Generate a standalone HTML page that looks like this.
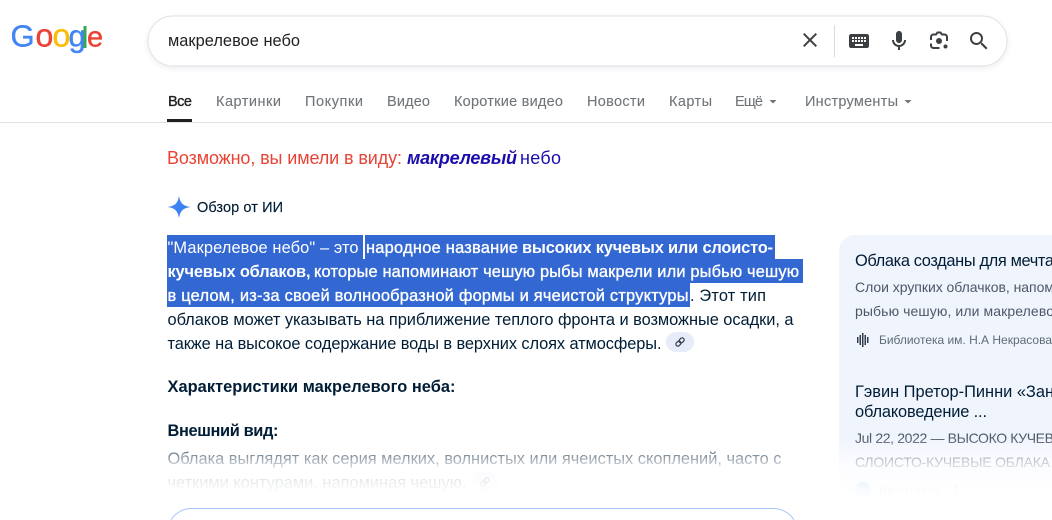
<!DOCTYPE html>
<html lang="ru">
<head>
<meta charset="utf-8">
<title>макрелевое небо</title>
<style>
html,body{margin:0;padding:0;width:1052px;height:520px;overflow:hidden;background:#fff}
svg{display:block;position:absolute;left:0;top:0}
text{font-family:"Liberation Sans",sans-serif;white-space:pre}
.nav{font-size:14.5px;fill:#70757a;stroke:#70757a;stroke-width:.1}
.b{font-size:16.4px;fill:#001d35}
.w{font-size:16.4px;fill:#fff}
.wm{font-size:16.4px;fill:#fff;stroke:#fff;stroke-width:.35}
.wb{font-size:16.4px;fill:#fff;font-weight:bold}
.h{font-size:16.4px;fill:#001d35;font-weight:bold}
.ct{font-size:16.4px;fill:#001d35}
.cs{font-size:14px;fill:#4d5866}
.cm{font-size:12px;fill:#5f6b78}
.logo{font-size:31px;stroke-width:.4}
</style>
</head>
<body>
<svg width="1052" height="520" viewBox="0 0 1052 520" xmlns="http://www.w3.org/2000/svg">
<defs>
<linearGradient id="fade" gradientUnits="userSpaceOnUse" x1="0" y1="437" x2="0" y2="502">
<stop offset="0" stop-color="#fff" stop-opacity="0"/>
<stop offset=".42" stop-color="#fff" stop-opacity=".76"/>
<stop offset=".78" stop-color="#fff" stop-opacity=".96"/>
<stop offset="1" stop-color="#fff" stop-opacity="1"/>
</linearGradient>
<linearGradient id="star" x1="0" y1="0" x2="1" y2="1">
<stop offset="0" stop-color="#4c8df6"/>
<stop offset="1" stop-color="#2f78ee"/>
</linearGradient>
<filter id="sh" x="-5%" y="-30%" width="110%" height="170%">
<feDropShadow dx="0" dy="2" stdDeviation="3" flood-color="#202124" flood-opacity=".07"/>
</filter>
</defs>

<!-- logo -->
<g class="logo">
<text class="logo" x="10.500" y="46.500" fill="#4285f4" stroke="#4285f4">G</text>
<text class="logo" x="35.500" y="46.500" fill="#ea4335" stroke="#ea4335" style="font-size:32px">o</text>
<text class="logo" x="52.500" y="46.500" fill="#fbbc05" stroke="#fbbc05" style="font-size:32px">o</text>
<text class="logo" x="68.500" y="46.500" fill="#4285f4" stroke="#4285f4" style="font-size:31px">g</text>
<rect x="83.500" y="26" width="3" height="22" fill="#34a853"/>
<text class="logo" x="87" y="46.500" fill="#ea4335" stroke="#ea4335" style="font-size:29px">e</text>
</g>

<!-- search box -->
<rect x="148" y="16" width="859" height="50" rx="25" fill="#fff" stroke="#dfe0ea" stroke-width="1" filter="url(#sh)"/>
<text x="168" y="46" font-size="16.4" fill="#202124" textLength="132">макрелевое небо</text>
<g fill="#3c4043">
<path transform="translate(798,28)" d="M19 6.41L17.59 5 12 10.59 6.41 5 5 6.41 10.59 12 5 17.59 6.41 19 12 13.41 17.59 19 19 17.59 13.41 12z"/>
<rect x="834" y="25" width="1" height="32" fill="#dadce0"/>
<path transform="translate(847,29)" d="M20 5H4c-1.1 0-1.99.9-1.99 2L2 17c0 1.1.9 2 2 2h16c1.1 0 2-.9 2-2V7c0-1.1-.9-2-2-2zm-9 3h2v2h-2V8zm0 3h2v2h-2v-2zM8 8h2v2H8V8zm0 3h2v2H8v-2zm-1 2H5v-2h2v2zm0-3H5V8h2v2zm9 7H8v-2h8v2zm0-4h-2v-2h2v2zm0-3h-2V8h2v2zm3 3h-2v-2h2v2zm0-3h-2V8h2v2z"/>
<path transform="translate(887,29)" d="M12 14c1.66 0 3-1.34 3-3V5c0-1.66-1.34-3-3-3S9 3.34 9 5v6c0 1.66 1.34 3 3 3zM17 11c0 2.76-2.24 5-5 5s-5-2.24-5-5H5c0 3.53 2.61 6.43 6 6.92V21h2v-3.08c3.39-.49 6-3.39 6-6.92h-2z"/>
<path d="M931 40v-3a2.500 2.500 0 0 1 2.500-2.500h2.500l1.500-2h3l1.500 2h2.500a2.500 2.500 0 0 1 2.500 2.500v4" fill="none" stroke="#3c4043" stroke-width="2"/>
<path d="M931 43.500v2a2.500 2.500 0 0 0 2.500 2.500h6" fill="none" stroke="#3c4043" stroke-width="2"/>
<circle cx="939" cy="41" r="3"/>
<circle cx="945.500" cy="46.500" r="2"/>
<path transform="translate(967,29)" d="M15.500 14h-.79l-.28-.27A6.471 6.471 0 0 0 16 9.500 6.500 6.500 0 1 0 9.500 16c1.610 0 3.090-.59 4.230-1.570l.27.28v.79l5 4.990L20.490 19l-4.990-5zm-6 0C7.010 14 5 11.990 5 9.500S7.010 5 9.500 5 14 7.010 14 9.500 11.990 14 9.500 14z"/>
</g>

<!-- tabs -->
<text x="168" y="106" font-size="14.5" fill="#1f1f1f" stroke="#1f1f1f" stroke-width=".35" textLength="24">Все</text>
<text class="nav" x="216" y="106" textLength="65">Картинки</text>
<text class="nav" x="305" y="106" textLength="58">Покупки</text>
<text class="nav" x="387" y="106" textLength="43">Видео</text>
<text class="nav" x="454" y="106" textLength="109">Короткие видео</text>
<text class="nav" x="587" y="106" textLength="58">Новости</text>
<text class="nav" x="669" y="106" textLength="43">Карты</text>
<text class="nav" x="735" y="106" textLength="28">Ещё</text>
<path d="M769.500 100h7l-3.500 3.500z" fill="#70757a"/>
<text class="nav" x="805" y="106" textLength="93">Инструменты</text>
<path d="M904.500 100h7l-3.500 3.500z" fill="#70757a"/>
<rect x="0" y="122" width="1052" height="1" fill="#e0e0e2"/>
<rect x="167" y="119" width="25" height="3" fill="#1f1f1f"/>

<!-- did you mean -->
<text x="167" y="164" font-size="18" fill="#ea4335" textLength="235">Возможно, вы имели в виду:</text>
<text x="407" y="164" font-size="18" font-weight="bold" font-style="italic" fill="#1a0dab" textLength="110">макрелевый</text>
<text x="520" y="164" font-size="18" fill="#1a0dab" textLength="41">небо</text>

<!-- AI header -->
<path d="M179 195.500C180 203 183 206 190.500 207 183 208 180 211 179 218.500 178 211 175 208 167.500 207 175 206 178 203 179 195.500z" fill="url(#star)"/>
<text x="197" y="212" font-size="14.500" fill="#001d35" stroke="#001d35" stroke-width=".15" textLength="86">Обзор от ИИ</text>

<!-- selection -->
<rect x="167" y="235" width="196" height="24" fill="#3367d1"/>
<rect x="365" y="235" width="410" height="24" fill="#3367d1"/>
<rect x="167" y="259" width="636" height="24" fill="#3367d1"/>
<rect x="167" y="283" width="523" height="24" fill="#3367d1"/>

<!-- paragraph -->
<text class="w" x="167.500" y="253" textLength="191">"Макрелевое небо" – это</text>
<text class="wm" x="366" y="253" textLength="152">народное название</text>
<text class="wb" x="522" y="253" textLength="251">высоких кучевых или слоисто-</text>
<text class="wb" x="167.500" y="277" textLength="143">кучевых облаков,</text>
<text class="wm" x="314" y="277" textLength="485">которые напоминают чешую рыбы макрели или рыбью чешую</text>
<text class="wm" x="167.500" y="301" textLength="521">в целом, из-за своей волнообразной формы и ячеистой структуры</text>
<text class="b" x="690" y="301" textLength="76">. Этот тип</text>
<text class="b" x="167.500" y="325" textLength="626">облаков может указывать на приближение теплого фронта и возможные осадки, а</text>
<text class="b" x="167.500" y="349" textLength="494">также на высокое содержание воды в верхних слоях атмосферы.</text>
<rect x="666" y="332" width="28" height="20" rx="10" fill="#e8ecf8"/>
<g transform="translate(680,342) rotate(-45)" fill="none" stroke="#2f3b4d" stroke-width="1.200">
<rect x="-5" y="-2" width="5.500" height="4" rx="2"/>
<rect x="-.5" y="-2" width="5.500" height="4" rx="2"/>
</g>

<text class="h" x="167.500" y="392" textLength="288">Характеристики макрелевого неба:</text>
<text class="h" x="167.500" y="436" textLength="111">Внешний вид:</text>

<text class="b" x="167.500" y="464" textLength="614">Облака выглядят как серия мелких, волнистых или ячеистых скоплений, часто с</text>
<text class="b" x="167.500" y="488" textLength="299">четкими контурами, напоминая чешую.</text>
<rect x="472" y="472" width="26" height="20" rx="10" fill="#e8ecf8"/>
<g transform="translate(485,482) rotate(-45)" fill="none" stroke="#2f3b4d" stroke-width="1.200">
<rect x="-5" y="-2" width="5.500" height="4" rx="2"/>
<rect x="-.5" y="-2" width="5.500" height="4" rx="2"/>
</g>

<!-- right column -->
<path d="M855 235H1052V502H839V251a16 16 0 0 1 16-16z" fill="#f0f4fd"/>
<text class="ct" x="855" y="266" textLength="199">Облака созданы для мечта</text>
<text class="cs" x="855" y="292" textLength="199">Слои хрупких облачков, напом</text>
<text class="cs" x="855" y="316" textLength="199">рыбью чешую, или макрелево</text>
<g fill="#2f3b4d">
<rect x="857" y="337" width="1.500" height="6"/><rect x="859.500" y="335" width="1.500" height="10"/><rect x="862" y="333" width="1.500" height="14"/><rect x="864.500" y="335" width="1.500" height="10"/><rect x="867" y="337" width="1.500" height="6"/>
</g>
<text class="cm" x="879" y="344" textLength="173">Библиотека им. Н.А Некрасова</text>
<text class="ct" x="855" y="397" textLength="199">Гэвин Претор-Пинни «Зан</text>
<text class="ct" x="855" y="417" textLength="132">облаковедение ...</text>
<text class="cs" x="855" y="443" textLength="199">Jul 22, 2022 — ВЫСОКО КУЧЕВ</text>
<text class="cs" x="855" y="467" textLength="195">СЛОИСТО-КУЧЕВЫЕ ОБЛАКА</text>
<circle cx="863" cy="490" r="8" fill="#2787f5"/>
<text class="cm" x="879" y="495" textLength="60">ВКонтакте</text>
<g fill="#5f6b78"><circle cx="956" cy="486" r="1.300"/><circle cx="956" cy="491" r="1.300"/><circle cx="956" cy="496" r="1.300"/></g>

<!-- fade -->
<rect x="0" y="437" width="1052" height="65" fill="url(#fade)"/>

<!-- show more button -->
<path d="M171 520A24 24 0 0 1 191.500 508.500H773.500A24 24 0 0 1 794 520" fill="none" stroke="#a8c7fa" stroke-width="1"/>
</svg>
</body>
</html>
